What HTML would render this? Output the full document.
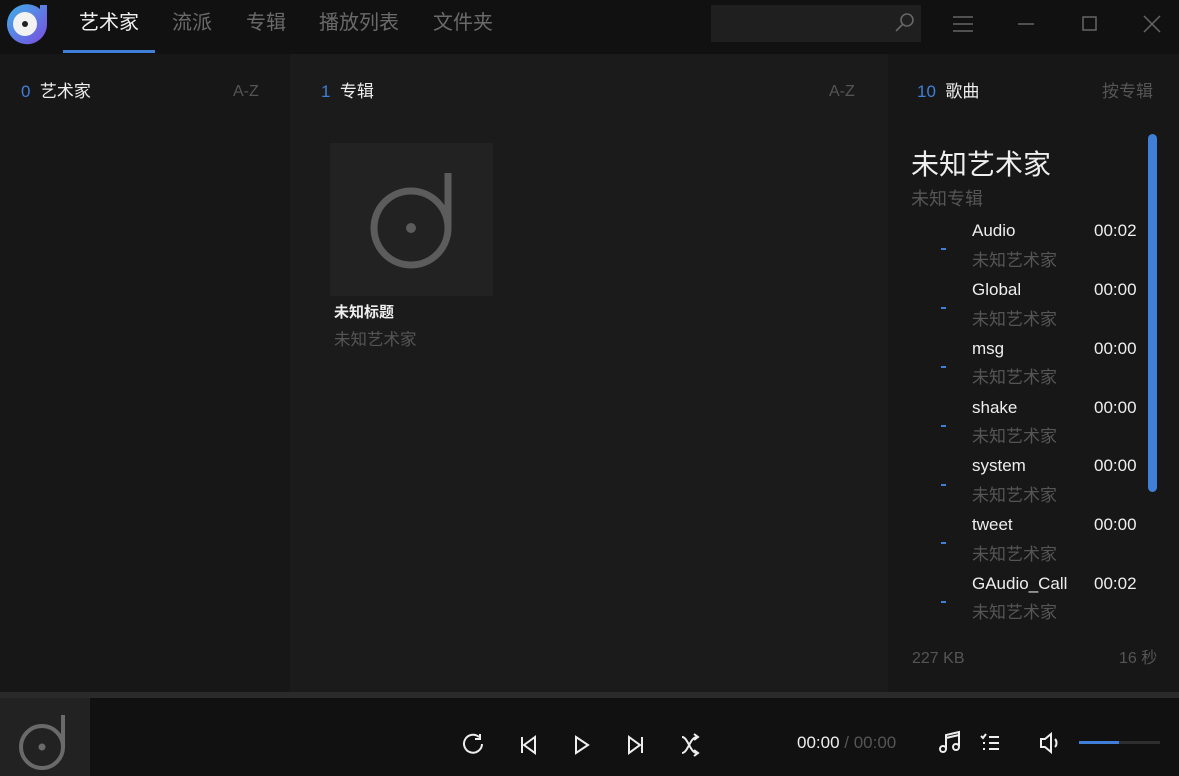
<!DOCTYPE html>
<html><head><meta charset="utf-8"><style>
*{margin:0;padding:0;box-sizing:border-box}
body{width:1179px;height:776px;background:#111;font-family:"Liberation Sans","Noto Sans CJK SC",sans-serif;position:relative;overflow:hidden;color:#ddd}
.a{position:absolute;white-space:nowrap;line-height:1}
.tab{top:13px;font-size:20px;color:#6a6a6a}
.blue{color:#3f7fd8}
.hdr{top:83px;font-size:17px;color:#eee}
.gray{color:#555}
.t{font-size:17px;color:#eee}
.s{font-size:17px;color:#555}
.dash{width:5px;height:2px;background:#3f7fd8}
</style></head><body>
<svg class="a" style="left:4px;top:3px" width="44" height="42" viewBox="0 0 44 42">
<defs><linearGradient id="g" x1="0" y1="0" x2="1" y2="1"><stop offset="0" stop-color="#3fb0e8"/><stop offset="1" stop-color="#7a4be0"/></linearGradient></defs>
<path d="M36 2 h7 v19 a20 20 0 1 1 -7 -15z" fill="url(#g)"/>
<circle cx="21" cy="21" r="12" fill="#f2f2f2"/><circle cx="21" cy="21" r="3" fill="#222"/>
</svg>
<div class="a tab" style="left:79px;color:#eee">艺术家</div>
<div class="a" style="left:63px;top:50px;width:92px;height:3px;background:#3f7fd8"></div>
<div class="a tab" style="left:172px">流派</div>
<div class="a tab" style="left:246px">专辑</div>
<div class="a tab" style="left:319px">播放列表</div>
<div class="a tab" style="left:433px">文件夹</div>
<div class="a" style="left:711px;top:5px;width:210px;height:37px;background:#1f1f1f"></div>
<svg class="a" style="left:893px;top:11px" width="24" height="24" viewBox="0 0 24 24" fill="none" stroke="#666" stroke-width="1.6"><circle cx="14" cy="9" r="6"/><path d="M9.5 13.5 3 20"/></svg>
<svg class="a" style="left:950px;top:14px" width="26" height="20" stroke="#666" stroke-width="1.6"><path d="M3 3h20M3 10h20M3 17h20"/></svg>
<svg class="a" style="left:1016px;top:14px" width="20" height="20" stroke="#666" stroke-width="1.5"><path d="M2 10h16"/></svg>
<svg class="a" style="left:1080px;top:14px" width="20" height="20" fill="none" stroke="#666" stroke-width="1.5"><rect x="3" y="3" width="13" height="13"/></svg>
<svg class="a" style="left:1142px;top:14px" width="20" height="20" stroke="#666" stroke-width="1.5"><path d="M2 2l16 16M18 2L2 18"/></svg>

<div class="a" style="left:0;top:54px;width:290px;height:638px;background:#171717"></div>
<div class="a" style="left:290px;top:54px;width:598px;height:638px;background:#1b1b1b"></div>
<div class="a" style="left:888px;top:54px;width:291px;height:638px;background:#171717"></div>
<div class="a" style="left:0;top:692px;width:1179px;height:6px;background:#2a2a2a"></div>

<div class="a hdr" style="left:21px"><span class="blue">0</span>&nbsp; 艺术家</div>
<div class="a hdr gray" style="left:233px;font-size:16px;top:84px">A-Z</div>
<div class="a hdr" style="left:321px"><span class="blue">1</span>&nbsp; 专辑</div>
<div class="a hdr gray" style="left:829px;font-size:16px;top:84px">A-Z</div>
<div class="a hdr" style="left:917px"><span class="blue">10</span>&nbsp; 歌曲</div>
<div class="a hdr gray" style="left:1102px">按专辑</div>

<div class="a" style="left:330px;top:143px;width:163px;height:153px;background:#222"></div>
<svg class="a" style="left:330px;top:143px" width="163" height="153" fill="none" stroke="#5c5c5c" stroke-width="7"><circle cx="81" cy="85" r="37"/><path d="M118 30v56"/><circle cx="81" cy="85" r="5" fill="#5c5c5c" stroke="none"/></svg>
<div class="a" style="left:334px;top:305px;font-size:15px;color:#eee;font-weight:bold">未知标题</div>
<div class="a s" style="left:334px;top:332px;font-size:16.5px">未知艺术家</div>

<div class="a" style="left:911px;top:151px;font-size:28px;color:#eee">未知艺术家</div>
<div class="a s" style="left:911px;top:190px;font-size:18px">未知专辑</div>
<div class="a" style="left:1148px;top:134px;width:9px;height:358px;background:#3f7fd8;border-radius:5px"></div>

<div class="a t" style="left:972px;top:222px">Audio</div><div class="a t" style="left:1094px;top:222px">00:02</div><div class="a s" style="left:972px;top:252px">未知艺术家</div><div class="a dash" style="left:941px;top:248px"></div>
<div class="a t" style="left:972px;top:281px">Global</div><div class="a t" style="left:1094px;top:281px">00:00</div><div class="a s" style="left:972px;top:311px">未知艺术家</div><div class="a dash" style="left:941px;top:307px"></div>
<div class="a t" style="left:972px;top:340px">msg</div><div class="a t" style="left:1094px;top:340px">00:00</div><div class="a s" style="left:972px;top:369px">未知艺术家</div><div class="a dash" style="left:941px;top:366px"></div>
<div class="a t" style="left:972px;top:399px">shake</div><div class="a t" style="left:1094px;top:399px">00:00</div><div class="a s" style="left:972px;top:428px">未知艺术家</div><div class="a dash" style="left:941px;top:425px"></div>
<div class="a t" style="left:972px;top:457px">system</div><div class="a t" style="left:1094px;top:457px">00:00</div><div class="a s" style="left:972px;top:487px">未知艺术家</div><div class="a dash" style="left:941px;top:484px"></div>
<div class="a t" style="left:972px;top:516px">tweet</div><div class="a t" style="left:1094px;top:516px">00:00</div><div class="a s" style="left:972px;top:546px">未知艺术家</div><div class="a dash" style="left:941px;top:542px"></div>
<div class="a t" style="left:972px;top:575px">GAudio_Call</div><div class="a t" style="left:1094px;top:575px">00:02</div><div class="a s" style="left:972px;top:604px">未知艺术家</div><div class="a dash" style="left:941px;top:601px"></div>
<div class="a s" style="left:912px;top:651px;font-size:16px">227 KB</div>
<div class="a s" style="left:1119px;top:651px;font-size:16px">16 秒</div>

<div class="a" style="left:0;top:698px;width:90px;height:78px;background:#222"></div>
<svg class="a" style="left:0;top:698px" width="90" height="78" fill="none" stroke="#6a6a6a" stroke-width="4"><circle cx="42" cy="49" r="21"/><path d="M63 17v33"/><circle cx="42" cy="49" r="3.5" fill="#6a6a6a" stroke="none"/></svg>
<svg class="a" style="left:460px;top:732px" width="250" height="26" fill="none" stroke="#eee" stroke-width="2">
<path d="M22 12a9 9 0 1 1-3-7"/><path d="M20 2v5h-5"/>
<path d="M62 5v16M75 5L64 13l11 8z"/>
<path d="M116 5l12 8-12 8z"/>
<path d="M169 5l11 8-11 8zM182 5v16"/>
<path d="M222 5c6 0 8 16 15 16M222 21c6 0 8-16 15-16M234 2l4 3-4 3M234 18l4 3-4 3"/>
</svg>
<div class="a" style="left:797px;top:734px;font-size:17px;color:#eee">00:00 <span style="color:#555">/ 00:00</span></div>
<svg class="a" style="left:938px;top:730px" width="120" height="26" fill="none" stroke="#eee" stroke-width="2">
<path d="M8 19V5l13-3v14"/><circle cx="5" cy="19" r="3"/><circle cx="18" cy="17" r="3"/><path d="M8 8l13-3"/>
<path d="M43 6l2 2 3-4M51 7h10M51 13h10M51 19h10M45 13h2M45 19h2"/>
<path d="M103 9h4l6-5v18l-6-5h-4z"/><path d="M117 9c2 2 2 6 0 8"/>
</svg>
<div class="a" style="left:1079px;top:741px;width:81px;height:3px;background:#2e2e2e"></div>
<div class="a" style="left:1079px;top:741px;width:40px;height:3px;background:#3f7fd8"></div>
</body></html>
